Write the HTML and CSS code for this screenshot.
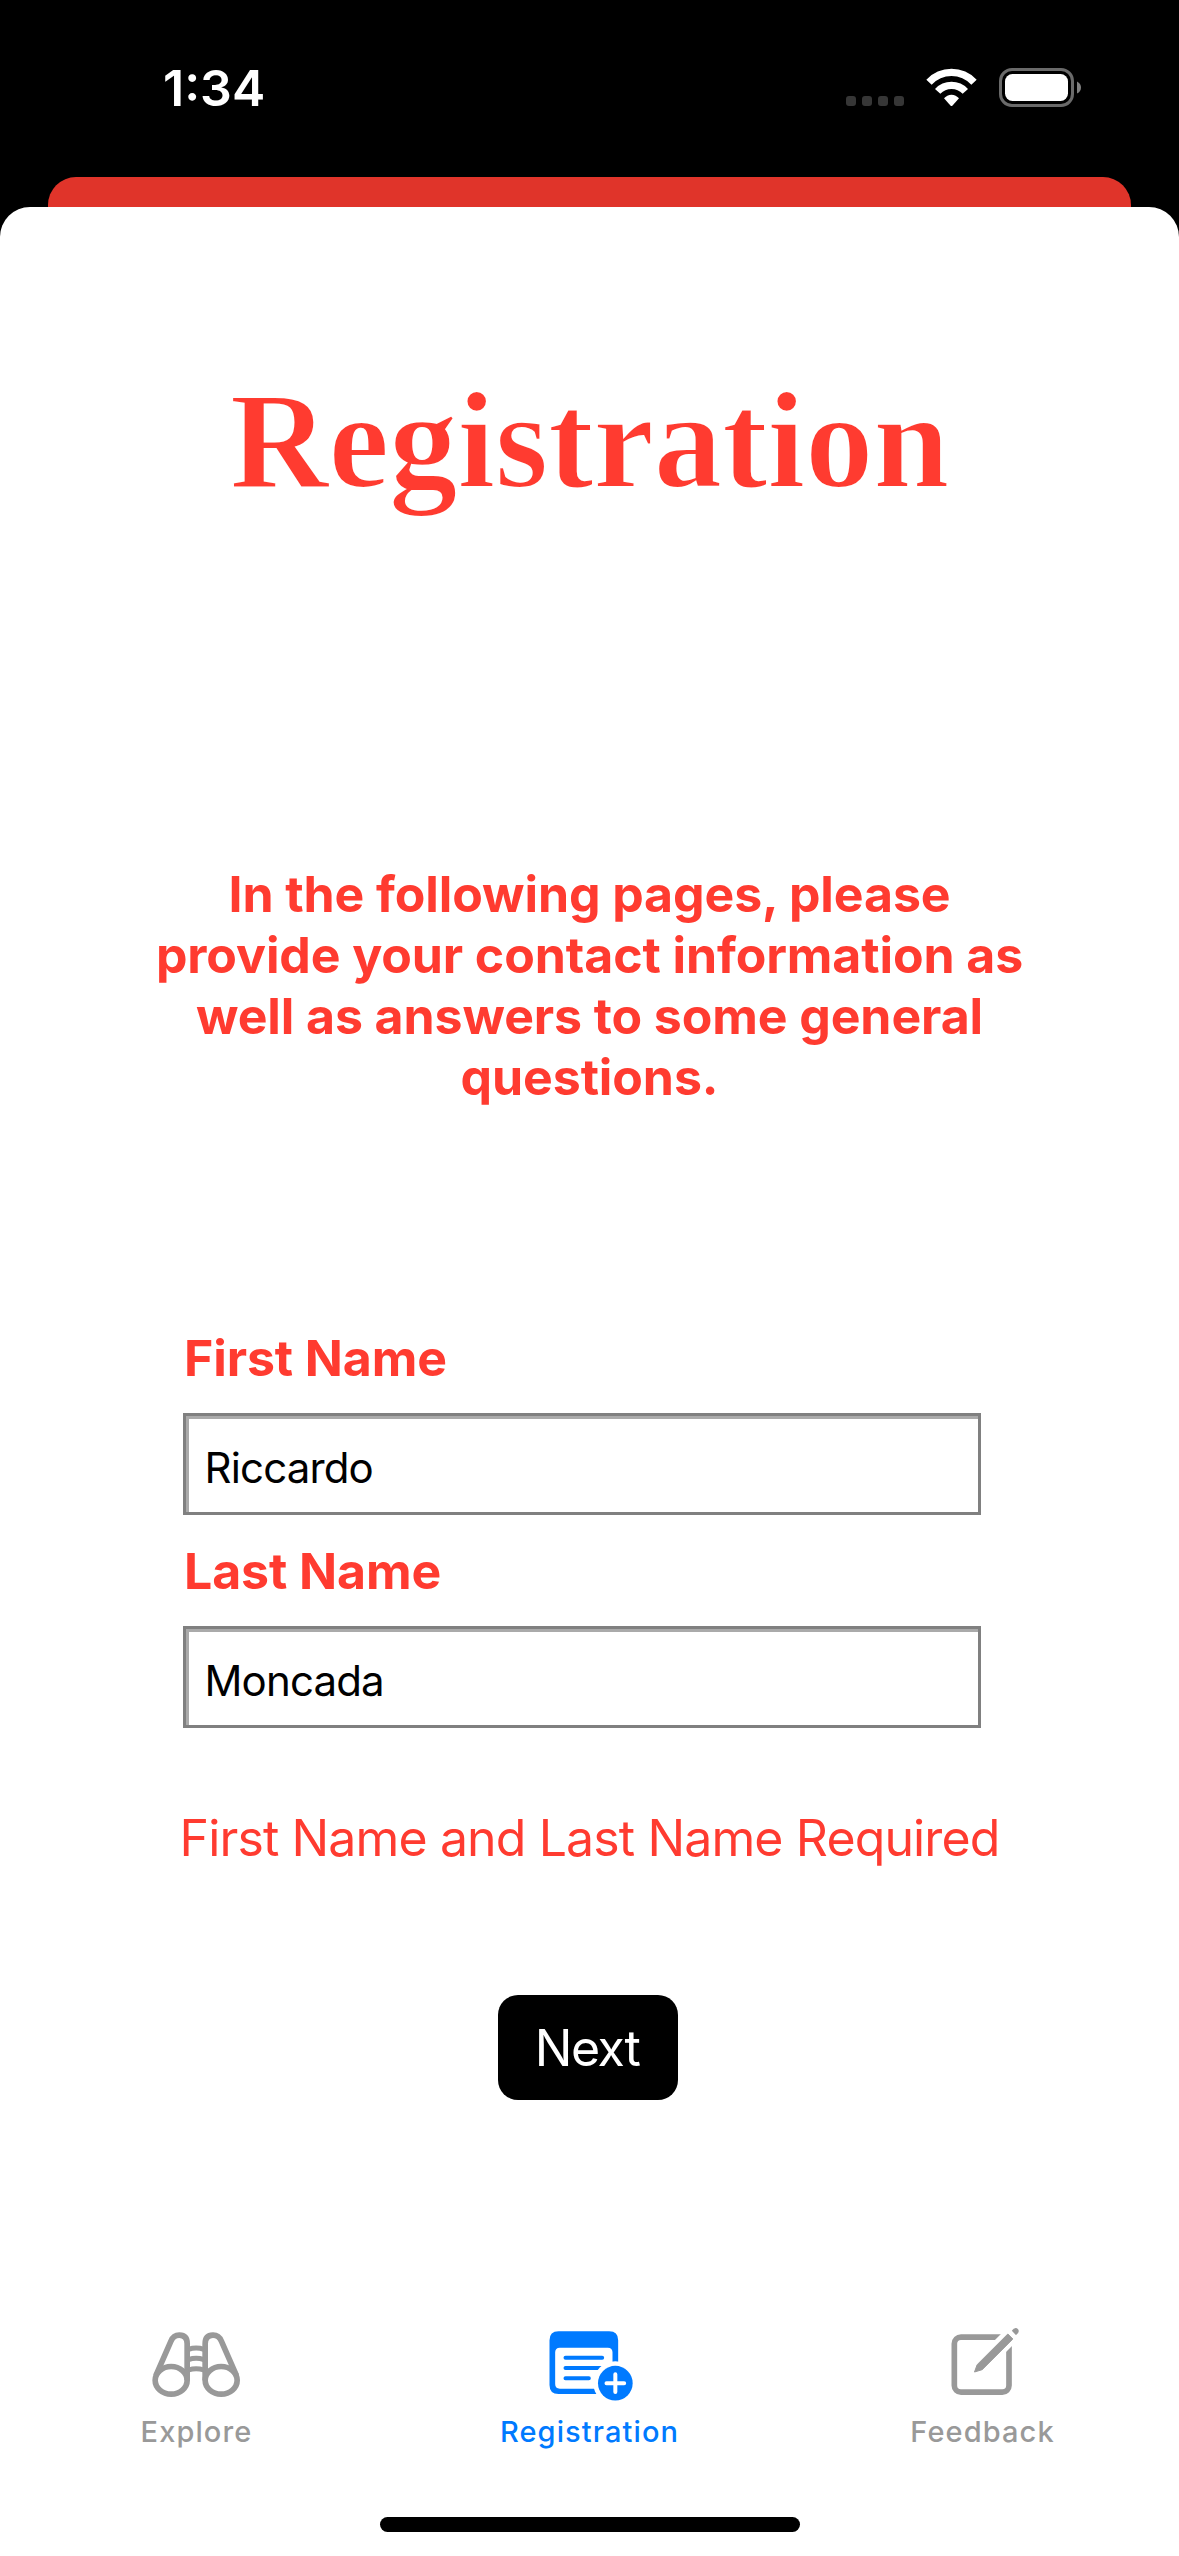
FILE: index.html
```html
<!DOCTYPE html>
<html lang="en">
<head>
<meta charset="utf-8">
<title>Registration</title>
<link rel="stylesheet" href="styles.css">
</head>
<body>
<header class="status">
  <span class="time">1:34</span>
  <div class="indicators">
    <div class="cellular"><i></i><i></i><i></i><i></i></div>
    <svg class="wifi" viewBox="378 84 153 117" aria-hidden="true">
      <path d="M379 119A103 103 0 0 1 530 119L514 134A81 81 0 0 0 395 134Z"/>
      <path d="M405 147A67 67 0 0 1 504 147L488 161A47 47 0 0 0 421 161Z"/>
      <path d="M432 175A29 29 0 0 1 477 175L457 197Q454.500 199 452 197Z"/>
    </svg>
    <svg class="battery" viewBox="0 0 82 39" aria-hidden="true">
      <rect x="1.500" y="1.500" width="72" height="36" rx="11.500" fill="none" stroke="#6a6a6a" stroke-width="3"/>
      <rect x="6" y="6" width="63" height="27" rx="7.500" fill="#fff"/>
      <path d="M78 13.500Q82 15.500 82 19.500T78 25.500Z" fill="#808080"/>
    </svg>
  </div>
</header>
<div class="backdrop"></div>
<main class="sheet">
  <h1 class="title">Registration</h1>
  <p class="intro">In the following pages, please<br>provide your contact information as<br>well as answers to some general<br>questions.</p>
  <form class="form">
    <label class="label" for="first">First Name</label>
    <input class="field" id="first" type="text" value="Riccardo">
    <label class="label label-last" for="last">Last Name</label>
    <input class="field" id="last" type="text" value="Moncada">
    <p class="message">First Name and Last Name Required</p>
    <button class="next" type="button">Next</button>
  </form>
  <nav class="tabs">
    <a class="tab">
      <svg class="icon" viewBox="85.500 30 288 270" fill="none" stroke="currentColor" stroke-width="17" aria-hidden="true">
        <ellipse cx="152" cy="211" rx="48" ry="41.500"/>
        <ellipse cx="302" cy="211" rx="48" ry="41.500"/>
        <path d="M106 197L151 94Q159 75 177 75.500Q200 76 200 101V211M348 197L303 94Q295 75 277 75.500Q254 76 254 101V211"/>
        <path d="M204 118Q227 110 250 118M204 149Q227 141 250 149M204 180Q227 172 250 180" stroke-width="15"/>
      </svg>
      <span class="tab-label">Explore</span>
    </a>
    <a class="tab active">
      <svg class="icon" viewBox="184.500 30 288 270" aria-hidden="true">
        <path fill="currentColor" fill-rule="evenodd" d="M234 64H386Q413 64 413 91V225Q413 252 386 252H234Q207 252 207 225V91Q207 64 234 64ZM238 113Q224 113 224 127V222Q224 236 238 236H382Q396 236 396 222V127Q396 113 382 113Z"/>
        <path d="M255 143.500H365M255 174H365M255 204.500H325" stroke="currentColor" stroke-width="12" stroke-linecap="round"/>
        <circle cx="404.500" cy="219.500" r="66" fill="#fff"/>
        <circle cx="404.500" cy="219.500" r="52" fill="currentColor"/>
        <path d="M378 219.500H431M404.500 193V246" stroke="#fff" stroke-width="12" stroke-linecap="round"/>
      </svg>
      <span class="tab-label">Registration</span>
    </a>
    <a class="tab">
      <svg class="icon" viewBox="133.500 30 288 270" aria-hidden="true">
        <rect x="191.500" y="81.500" width="164" height="165" rx="20" fill="none" stroke="currentColor" stroke-width="17"/>
        <path d="M318 120L395 43" stroke="#fff" stroke-width="49"/>
        <path d="M252 186L260 164L352 72L367 87L275 179Z" fill="currentColor" stroke="currentColor" stroke-width="3" stroke-linejoin="round"/>
        <path d="M364 62Q370 53 377 54Q384 56 385 63Q385 70 376 75Z" fill="currentColor"/>
      </svg>
      <span class="tab-label">Feedback</span>
    </a>
  </nav>
  <div class="home"></div>
</main>
</body>
</html>
```
FILE: styles.css
```css
* {
  box-sizing: border-box;
}

body {
  margin: 0;
  height: 2556px;
  display: flex;
  flex-direction: column;
  background: #000;
  font-family: Inter, "Liberation Sans", sans-serif;
  overflow: hidden;
}

.status {
  height: 177px;
  display: flex;
  justify-content: space-between;
  align-items: flex-start;
  padding: 58px 98px 0 163px;
  color: #fff;
}

.time {
  font-size: 50px;
  font-weight: 600;
  line-height: 60px;
}

.indicators {
  display: flex;
  align-items: flex-start;
  padding-top: 10px;
}

.cellular {
  display: flex;
  gap: 6px;
  padding-top: 28px;
  margin-right: 22px;
}

.cellular i {
  width: 10px;
  height: 10px;
  border-radius: 3px;
  background: #363636;
}

.wifi {
  width: 51px;
  height: 39px;
  margin-right: 22px;
  fill: #fff;
}

.battery {
  width: 82px;
  height: 39px;
}

.backdrop {
  height: 60px;
  margin: 0 48px -30px;
  border-radius: 28px 28px 0 0;
  background: #e0342a;
}

.sheet {
  flex: 1;
  display: flex;
  flex-direction: column;
  align-items: center;
  padding-top: 154px;
  border-radius: 30px 30px 0 0;
  background: #fff;
  color: #ff3b30;
}

.title {
  margin: 0;
  font-family: "Liberation Serif", serif;
  font-weight: 700;
  font-size: 137px;
  line-height: 160px;
  letter-spacing: -0.3px;
  -webkit-text-stroke: 2px #fff;
}

.intro {
  margin: 343px 0 0;
  font-size: 50px;
  font-weight: 650;
  line-height: 61px;
  letter-spacing: -0.1px;
  text-align: center;
}

.form {
  width: 816px;
  margin-top: 220px;
  display: flex;
  flex-direction: column;
  align-items: flex-start;
}

.label {
  margin-left: 2.5px;
  font-size: 50px;
  font-weight: 650;
  line-height: 60px;
  letter-spacing: -0.1px;
}

.label-last {
  margin-top: 26px;
}

.field {
  width: 798px;
  height: 102px;
  margin: 25px 0 0 1px;
  padding: 6px 18px 0 19px;
  border: 3px solid #808080;
  border-radius: 0;
  outline: 0;
  background: #fff;
  box-shadow: inset 3px 3px #aaa;
  color: #000;
  font: 400 42px/60px Inter, "Liberation Sans", sans-serif;
  letter-spacing: -0.85px;
}

.message {
  align-self: center;
  margin: 80px 0 0;
  font-size: 50px;
  line-height: 60px;
  letter-spacing: -0.88px;
  white-space: nowrap;
}

.next {
  width: 180px;
  height: 105px;
  margin: 127px 0 0 316px;
  padding: 0 1px 0 0;
  border: 0;
  border-radius: 20px;
  background: #000;
  color: #fff;
  font: 400 50px/107px Inter, "Liberation Sans", sans-serif;
  letter-spacing: -1.4px;
}

.tabs {
  width: 100%;
  margin-top: 220px;
  display: grid;
  grid-template-columns: repeat(3, 1fr);
}

.tab {
  display: flex;
  flex-direction: column;
  align-items: center;
  color: #999;
}

.active {
  color: #007aff;
}

.icon {
  width: 96px;
  height: 90px;
}

.tab-label {
  margin-top: 2px;
  font-size: 29px;
  font-weight: 500;
  line-height: 40px;
  letter-spacing: 1.1px;
}

.home {
  width: 420px;
  height: 15px;
  margin-top: 65px;
  border-radius: 8px;
  background: #000;
}
```
